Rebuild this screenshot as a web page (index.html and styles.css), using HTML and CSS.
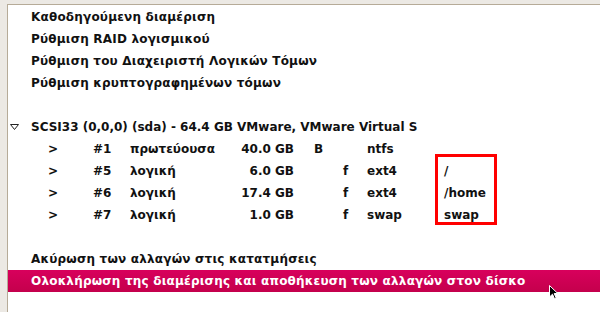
FILE: index.html
```html
<!DOCTYPE html>
<html lang="el">
<head>
  <meta charset="UTF-8">
  <title>Διαμέριση δίσκων</title>
  <link rel="stylesheet" href="styles.css">
</head>
<body>
  <div class="frame">
    <div class="list">
      <div class="row item">Καθοδηγούμενη διαμέριση</div>
      <div class="row item">Ρύθμιση RAID λογισμικού</div>
      <div class="row item">Ρύθμιση του Διαχειριστή Λογικών Τόμων</div>
      <div class="row item">Ρύθμιση κρυπτογραφημένων τόμων</div>
      <div class="row"></div>
      <div class="row disk">
        <svg class="expander" width="9" height="6" viewBox="0 0 9 6">
          <path d="M0.5 0.5 H8.5 L4.5 5.5 Z" fill="none" stroke="#222" stroke-width="1"/>
        </svg>
        <span>SCSI33 (0,0,0) (sda) - 64.4 GB VMware, VMware Virtual S</span>
      </div>
      <div class="parts">
        <div class="row part">
          <span>&gt;</span><span>#1</span><span>πρωτεύουσα</span><span class="size">40.0 GB</span><span class="boot">B</span><span class="fmt"></span><span>ntfs</span><span></span>
        </div>
        <div class="row part">
          <span>&gt;</span><span>#5</span><span>λογική</span><span class="size">6.0 GB</span><span class="boot"></span><span class="fmt">f</span><span>ext4</span><span>/</span>
        </div>
        <div class="row part">
          <span>&gt;</span><span>#6</span><span>λογική</span><span class="size">17.4 GB</span><span class="boot"></span><span class="fmt">f</span><span>ext4</span><span>/home</span>
        </div>
        <div class="row part">
          <span>&gt;</span><span>#7</span><span>λογική</span><span class="size">1.0 GB</span><span class="boot"></span><span class="fmt">f</span><span>swap</span><span>swap</span>
        </div>
        <div class="mark"></div>
      </div>
      <div class="row"></div>
      <div class="row item">Ακύρωση των αλλαγών στις κατατμήσεις</div>
      <div class="row item selected">Ολοκλήρωση της διαμέρισης και αποθήκευση των αλλαγών στον δίσκο</div>
    </div>
    <svg class="pointer" width="10" height="15" viewBox="0 0 10 15">
      <path d="M0.5 0.5 V12 L3.5 9.2 L5.5 13.8 L7.2 13 L5.2 8.5 H8.8 Z" fill="#000" stroke="#fff" stroke-width="1"/>
    </svg>
  </div>
</body>
</html>
```

FILE: styles.css
```css
body {
  margin: 0;
  background: #ece9e4;
  font-family: "DejaVu Sans", sans-serif;
  font-weight: bold;
  font-size: 12px;
  color: #111;
}
.frame {
  position: relative;
  margin: 4px 0 0 7px;
  height: 308px;
  background: white;
  border-top: 1px solid #b6ab98;
  border-left: 1px solid #b6ab98;
  overflow: hidden;
}
.list {
  padding-top: 1px;
}
.row {
  height: 22px;
  line-height: 22px;
  white-space: nowrap;
}
.item {
  padding-left: 23px;
  letter-spacing: 0.2px;
}
.disk {
  display: flex;
  align-items: center;
  padding-left: 2px;
}
.expander {
  margin-right: 12px;
}
.parts {
  position: relative;
}
.part {
  display: grid;
  grid-template-columns: 45px 37px 110px 74px 29px 24px 77px 80px;
  padding-left: 40px;
}
.part .size {
  text-align: right;
  padding-right: 20px;
}
.mark {
  position: absolute;
  left: 427px;
  top: 16px;
  width: 56px;
  height: 65px;
  border: 3px solid #ff0000;
}
.selected {
  background: linear-gradient(#d8005c, #c4004c);
  color: white;
}
.pointer {
  position: absolute;
  left: 541px;
  top: 280px;
}
```
